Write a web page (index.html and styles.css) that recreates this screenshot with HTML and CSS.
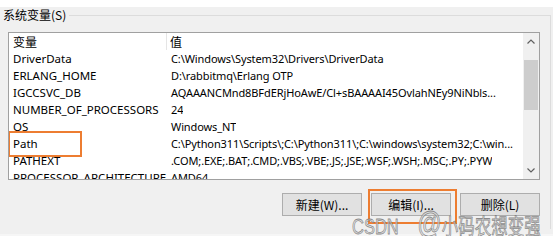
FILE: index.html
```html
<!DOCTYPE html>
<html lang="zh-CN">
<head>
    <meta charset="UTF-8">
    <title>系统变量</title>
    <link rel="stylesheet" href="styles.css">
</head>
<body>
    <div class="panel">
        <fieldset class="group">
            <legend>系统变量(S)</legend>
            <div class="listbox">
                <div class="list">
                    <div class="row head"><span class="name">变量</span><span class="value">值</span></div>
                    <div class="row"><span class="name">DriverData</span><span class="value">C:\Windows\System32\Drivers\DriverData</span></div>
                    <div class="row"><span class="name">ERLANG_HOME</span><span class="value">D:\rabbitmq\Erlang OTP</span></div>
                    <div class="row"><span class="name">IGCCSVC_DB</span><span class="value">AQAAANCMnd8BFdERjHoAwE/Cl+sBAAAAI45OvlahNEy9NiNbls...</span></div>
                    <div class="row"><span class="name">NUMBER_OF_PROCESSORS</span><span class="value">24</span></div>
                    <div class="row"><span class="name">OS</span><span class="value">Windows_NT</span></div>
                    <div class="row"><span class="name mark">Path</span><span class="value">C:\Python311\Scripts\;C:\Python311\;C:\windows\system32;C:\win...</span></div>
                    <div class="row"><span class="name">PATHEXT</span><span class="value">.COM;.EXE;.BAT;.CMD;.VBS;.VBE;.JS;.JSE;.WSF;.WSH;.MSC;.PY;.PYW</span></div>
                    <div class="row"><span class="name">PROCESSOR_ARCHITECTURE</span><span class="value">AMD64</span></div>
                </div>
                <div class="scrollbar">
                    <span class="arrow">
                        <svg width="8" height="5" viewBox="0 0 8 5"><path d="M0.5 4.5 L4 1 L7.5 4.5" fill="none" stroke="#606060" stroke-width="1.2"/></svg>
                    </span>
                    <span class="thumb"></span>
                    <span class="track"></span>
                    <span class="arrow">
                        <svg width="8" height="5" viewBox="0 0 8 5"><path d="M0.5 0.5 L4 4 L7.5 0.5" fill="none" stroke="#606060" stroke-width="1.2"/></svg>
                    </span>
                </div>
            </div>
            <div class="buttons">
                <button>新建(W)...</button>
                <button class="mark-btn">编辑(I)...</button>
                <button>删除(L)</button>
            </div>
        </fieldset>
        <div class="watermark">CSDN <span class="wm-at">@</span>小码农想变强</div>
    </div>
</body>
</html>
```
FILE: styles.css
```css
* {
    margin: 0;
    padding: 0;
    box-sizing: border-box;
}

body {
    background: #fff;
    font-family: "Noto Sans", "Noto Sans CJK SC", sans-serif;
    font-size: 12px;
    color: #000;
}

.panel {
    position: relative;
    width: 553px;
    height: 229px;
    margin-top: 7px;
    background: #f0f0f0;
    border-bottom: 2px solid #f6f6f6;
}

.group {
    width: 551px;
    height: 222px;
    margin-top: 4px;
    border: 1px solid #dcdcdc;
    border-left: none;
    border-bottom: none;
}

.group legend {
    padding: 0 3px;
    line-height: 16px;
    font-family: "Noto Sans CJK SC", sans-serif;
}

.listbox {
    display: flex;
    width: 532px;
    height: 148px;
    margin: 9px 0 0 8px;
    border: 1px solid #a0a0a0;
    background: #fff;
}

.list {
    flex: 1;
    overflow: hidden;
}

.row {
    display: flex;
    height: 17px;
    line-height: 17px;
    white-space: nowrap;
}

.name {
    position: relative;
    width: 158px;
    padding-left: 4px;
    flex-shrink: 0;
    font-size: 11.5px;
}

.value {
    padding-left: 4px;
    overflow: hidden;
    font-size: 11px;
    letter-spacing: -0.1px;
}

.head .name,
.head .value {
    font-family: "Noto Sans CJK SC", sans-serif;
    font-size: 12px;
    letter-spacing: 0;
}

.head .name {
    border-right: 1px solid #e5e5e5;
}

.head .value {
    padding-left: 3px;
}

.mark::after {
    content: "";
    position: absolute;
    left: -1px;
    top: -4px;
    width: 70px;
    height: 22px;
    border: 2px solid #ed7d31;
}

.scrollbar {
    display: flex;
    flex-direction: column;
    align-items: center;
    width: 16px;
    background: #f0f0f0;
}

.arrow {
    display: flex;
    align-items: center;
    justify-content: center;
    height: 17px;
}

.thumb {
    width: 14px;
    height: 50px;
    margin-top: 10px;
    background: #cdcdcd;
}

.track {
    flex: 1;
}

.buttons {
    display: flex;
    justify-content: flex-end;
    gap: 9px;
    width: 532px;
    margin: 13px 0 0 8px;
}

.buttons button {
    position: relative;
    width: 80px;
    height: 23px;
    background: #e1e1e1;
    border: 1px solid #adadad;
    font-family: "Noto Sans CJK SC", sans-serif;
    font-size: 12px;
    color: #000;
}

.mark-btn::after {
    content: "";
    position: absolute;
    left: -4px;
    top: -5px;
    width: 85px;
    height: 31px;
    border: 2px solid #ed7d31;
}

.watermark {
    position: absolute;
    left: 352px;
    top: 207px;
    font-family: "Liberation Sans", "Noto Sans CJK SC", sans-serif;
    font-size: 16.5px;
    line-height: 19px;
    word-spacing: 14px;
    color: rgba(220, 220, 220, 0.75);
    -webkit-text-stroke: 0.6px rgba(120, 120, 120, 0.85);
    white-space: nowrap;
    transform: scaleY(1.3);
    transform-origin: left top;
}

.wm-at {
    font-size: 24px;
    line-height: 0;
}
```
